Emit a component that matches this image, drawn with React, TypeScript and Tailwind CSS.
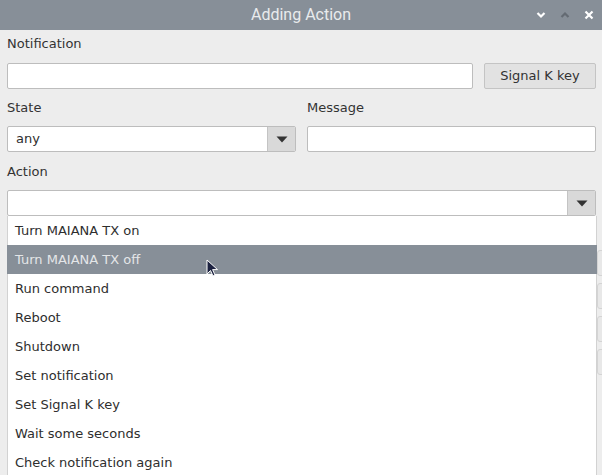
import React from "react";

const items = [
  "Turn MAIANA TX on",
  "Turn MAIANA TX off",
  "Run command",
  "Reboot",
  "Shutdown",
  "Set notification",
  "Set Signal K key",
  "Wait some seconds",
  "Check notification again",
];

const Arrow = () => (
  <div className="flex h-full w-[28px] items-center justify-center border-l border-[#c4c4c4] bg-[#d9d9d9]">
    <svg width="12" height="7" viewBox="0 0 12 7">
      <path d="M0.5 0.5 H11.5 L6 6.5 Z" fill="#333" />
    </svg>
  </div>
);

const Combo = ({ value }: { value?: string }) => (
  <div className="flex h-[26px] items-stretch overflow-hidden rounded-[2px] border border-[#bdbdbd] bg-white">
    <div className="flex flex-1 items-center pl-[8px] text-[#2e2e2e]">{value}</div>
    <Arrow />
  </div>
);

const Input = () => (
  <div className="h-[26px] rounded-[2px] border border-[#bdbdbd] bg-white" />
);

const App = () => {
  const selected = 1;

  return (
    <div
      className="relative h-[475px] w-[602px] overflow-hidden bg-[#ededed] text-[13px] text-[#333]"
      style={{ fontFamily: '"DejaVu Sans", "Noto Sans", sans-serif' }}
    >
      {/* window title bar */}
      <div className="relative flex h-[30px] items-center justify-center bg-[#878f98]">
        <span
          className="text-[16px] text-[#e9ebed]"
          style={{ fontFamily: 'Roboto, "Liberation Sans", sans-serif' }}
        >
          Adding Action
        </span>
        <div className="absolute right-[8px] top-0 flex h-full items-center gap-[14px]">
          <svg width="10" height="8" viewBox="0 0 10 8">
            <path d="M1.5 2 L5 5.5 L8.5 2" stroke="#fff" strokeWidth="2.2" fill="none" />
          </svg>
          <svg width="10" height="8" viewBox="0 0 10 8">
            <path d="M1.5 6 L5 2.5 L8.5 6" stroke="#646b73" strokeWidth="2.2" fill="none" />
          </svg>
          <svg width="10" height="10" viewBox="0 0 10 10">
            <path d="M1.5 1.5 L8.5 8.5 M8.5 1.5 L1.5 8.5" stroke="#fff" strokeWidth="2.2" />
          </svg>
        </div>
      </div>

      <div className="pl-[7px] pr-[6px]">
        <div className="mt-[4px] flex h-[20px] items-center">Notification</div>
        <div className="mt-[9px] flex gap-[11px]">
          <div className="flex-1">
            <Input />
          </div>
          <button className="flex h-[26px] w-[112px] items-center justify-center rounded-[2px] border border-[#c4c4c4] bg-[#e2e2e2] text-[#333]">
            Signal K key
          </button>
        </div>

        <div className="mt-[9px] grid grid-cols-2 gap-x-[11px]">
          <div className="flex h-[20px] items-center">State</div>
          <div className="flex h-[20px] items-center">Message</div>
          <div className="mt-[8px]">
            <Combo value="any" />
          </div>
          <div className="mt-[8px]">
            <Input />
          </div>
        </div>

        <div className="mt-[10px] flex h-[20px] items-center">Action</div>
        <div className="mt-[8px]">
          <Combo />
        </div>

        <div className="ml-[590px] mt-[34px] flex flex-col gap-[7px]">
          <div className="h-[26px] w-[24px] rounded-[3px] border border-[#d4d4d4] bg-[#e8e8e8]" />
          <div className="h-[26px] w-[24px] rounded-[3px] border border-[#d4d4d4] bg-[#e8e8e8]" />
          <div className="h-[26px] w-[24px] rounded-[3px] border border-[#d4d4d4] bg-[#e8e8e8]" />
          <div className="h-[26px] w-[24px] rounded-[3px] border border-[#d4d4d4] bg-[#e8e8e8]" />
        </div>
      </div>

      {/* open dropdown list */}
      <div className="absolute left-[7px] top-[216px] w-[590px] border-x border-[#d2d2d2] bg-white">
        {items.map((item, i) => (
          <div
            key={item}
            className={
              i === selected
                ? "-mx-px flex h-[29px] items-center bg-[#878f98] pl-[8px] text-[#e4e6e8]"
                : "flex h-[29px] items-center pl-[7px] text-[#2e2e2e]"
            }
          >
            {item}
          </div>
        ))}
      </div>

      {/* mouse pointer */}
      <svg
        className="absolute left-[206px] top-[259px]"
        width="14"
        height="20"
        viewBox="0 0 14 20"
      >
        <path
          d="M1 1 L1 15 L4.5 11.5 L7 17 L9 16 L6.6 10.6 L11.5 10.6 Z"
          fill="#1c2240"
          stroke="#fff"
          strokeWidth="1"
          strokeLinejoin="round"
        />
      </svg>
    </div>
  );
};

export default App;
